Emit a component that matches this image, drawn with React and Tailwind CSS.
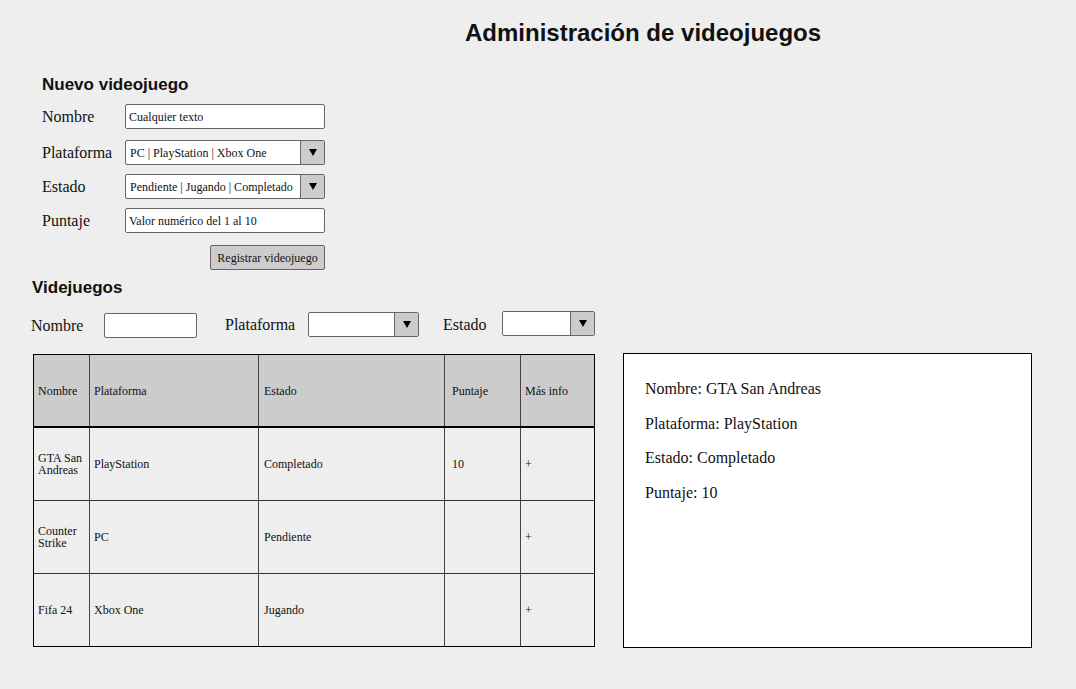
import React from "react";

const SERIF = "font-['Liberation_Serif',serif]";
const SANS = "font-['Liberation_Sans',Arial,sans-serif]";

const Arrow = () => (
  <svg width="8" height="7" viewBox="0 0 8 7" className="block">
    <path d="M0 0 L8 0 L4 7 Z" fill="#000" />
  </svg>
);

const TextBox = ({ value, className = "" }) => (
  <div
    className={`h-[25px] bg-white border-[1.5px] border-[#666] rounded-[2px] flex items-center pl-[3px] text-[12px] text-[#111] ${SERIF} ${className}`}
  >
    {value}
  </div>
);

const Select = ({ value, className = "" }) => (
  <div
    className={`h-[25px] bg-white border-[1.5px] border-[#666] rounded-[2px] flex ${SERIF} ${className}`}
  >
    <div className="flex-1 flex items-center pl-[4px] text-[12px] text-[#111] whitespace-nowrap overflow-hidden">
      {value}
    </div>
    <div className="w-[24px] bg-[#cccccc] border-l-[1.5px] border-[#666] flex items-center justify-center">
      <Arrow />
    </div>
  </div>
);

const FormRow = ({ label, children, className = "" }) => (
  <div className={`flex items-center ${className}`}>
    <div className={`w-[83px] text-[16px] text-[#111] ${SERIF}`}>{label}</div>
    {children}
  </div>
);

const COLS = [
  { label: "Nombre", w: "w-[56px]", pad: "pl-[4px]" },
  { label: "Plataforma", w: "w-[169px]", pad: "pl-[4px]" },
  { label: "Estado", w: "w-[186px]", pad: "pl-[5px]" },
  { label: "Puntaje", w: "w-[76px]", pad: "pl-[7px]" },
  { label: "Más info", w: "flex-1", pad: "pl-[4px]" },
];

const ROWS = [
  ["GTA San Andreas", "PlayStation", "Completado", "10", "+"],
  ["Counter Strike", "PC", "Pendiente", "", "+"],
  ["Fifa 24", "Xbox One", "Jugando", "", "+"],
];

const GameTable = () => (
  <div className={`w-[562px] border border-black bg-[#eeeeee] ${SERIF}`}>
    <div className="flex h-[73px] bg-[#cccccc] border-b-2 border-black">
      {COLS.map((c, i) => (
        <div
          key={c.label}
          className={`${c.w} ${c.pad} flex items-center text-[12px] text-[#111] ${
            i < COLS.length - 1 ? "border-r border-[#444]" : ""
          }`}
        >
          {c.label}
        </div>
      ))}
    </div>
    {ROWS.map((row, r) => (
      <div
        key={r}
        className={`flex ${r < ROWS.length - 1 ? "h-[73px] border-b border-[#333]" : "h-[72px]"}`}
      >
        {row.map((cell, i) => (
          <div
            key={i}
            className={`${COLS[i].w} ${COLS[i].pad} flex items-center text-[12px] leading-[12px] text-[#111] ${
              i < row.length - 1 ? "border-r border-[#444]" : ""
            }`}
          >
            {i === 0 ? <span className="w-[48px]">{cell}</span> : cell}
          </div>
        ))}
      </div>
    ))}
  </div>
);

const Detail = () => (
  <div className={`w-[409px] h-[295px] bg-white border border-black pl-[21px] pt-[23px] text-[16px] text-[#111] ${SERIF}`}>
    <div className="h-[35px]">Nombre: GTA San Andreas</div>
    <div className="h-[34px]">Plataforma: PlayStation</div>
    <div className="h-[35px]">Estado: Completado</div>
    <div>Puntaje: 10</div>
  </div>
);

export default function App() {
  return (
    <div className="min-h-screen w-full bg-[#eeeeee] text-[#111]">
      <h1 className={`${SANS} font-bold text-[24px] leading-[28px] pt-[19px] pl-[465px]`}>
        Administración de videojuegos
      </h1>

      <div className="pl-[42px] mt-[28px]">
        <h2 className={`${SANS} font-bold text-[17px] leading-[20px]`}>Nuevo videojuego</h2>
        <FormRow label="Nombre" className="mt-[9px]">
          <TextBox value="Cualquier texto" className="w-[200px]" />
        </FormRow>
        <FormRow label="Plataforma" className="mt-[11px]">
          <Select value="PC | PlayStation | Xbox One" className="w-[200px]" />
        </FormRow>
        <FormRow label="Estado" className="mt-[9px]">
          <Select value="Pendiente | Jugando | Completado" className="w-[200px]" />
        </FormRow>
        <FormRow label="Puntaje" className="mt-[9px]">
          <TextBox value="Valor numérico del 1 al 10" className="w-[200px]" />
        </FormRow>
        <div className="flex mt-[12px] pl-[168px]">
          <div
            className={`w-[115px] h-[25px] bg-[#cccccc] border-[1.5px] border-[#666] rounded-[2px] flex items-center justify-center text-[12px] ${SERIF}`}
          >
            Registrar videojuego
          </div>
        </div>
      </div>

      <div className="pl-[32px] mt-[8px]">
        <h2 className={`${SANS} font-bold text-[17px] leading-[20px]`}>Videjuegos</h2>
        <div className={`flex items-center mt-[13px] h-[27px] text-[16px] ${SERIF}`}>
          <span className="w-[73px] -ml-[1px] mt-[3px]">Nombre</span>
          <TextBox value="" className="w-[93px] mt-[2px]" />
          <span className="ml-[28px] w-[83px]">Plataforma</span>
          <Select value="" className="w-[111px]" />
          <span className="ml-[24px] w-[59px]">Estado</span>
          <Select value="" className="w-[93px] -mt-[2px]" />
        </div>
        <div className="flex items-start mt-[15px]">
          <div className="ml-[1px] mt-[1px]">
            <GameTable />
          </div>
          <div className="ml-[28px]">
            <Detail />
          </div>
        </div>
      </div>
    </div>
  );
}
